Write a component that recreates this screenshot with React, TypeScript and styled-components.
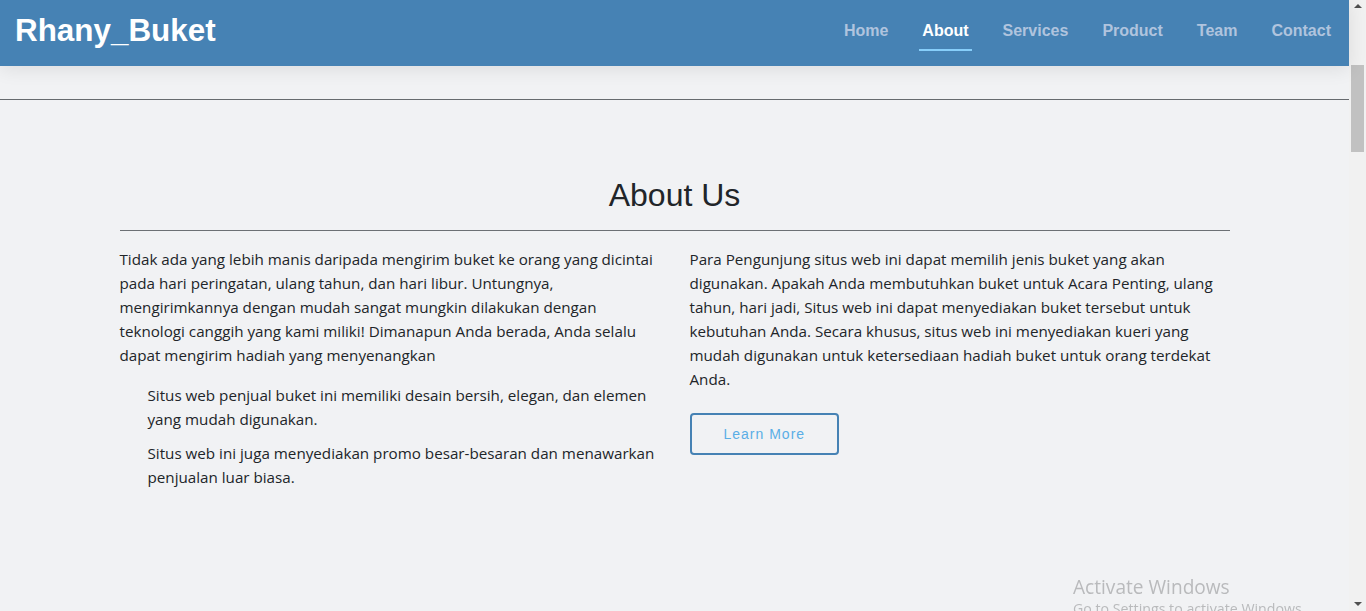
import React from "react";
import styled, { createGlobalStyle } from "styled-components";

const GlobalStyle = createGlobalStyle`
  html, body { height: 100%; }
  body {
    margin: 0;
    overflow: hidden;
    background: #f1f2f4;
    font-family: "Open Sans", "Noto Sans", sans-serif;
    color: #212529;
  }
  #root { height: 100%; }
`;

const Shell = styled.div`
  height: 100vh;
  display: grid;
  grid-template-columns: 1fr 17px;
  overflow: hidden;
`;

const Main = styled.main`
  min-width: 0;
  display: flex;
  flex-direction: column;
`;

const NavBar = styled.header`
  position: relative;
  z-index: 2;
  height: 66px;
  flex: none;
  box-sizing: border-box;
  padding: 0 15px;
  display: flex;
  align-items: center;
  justify-content: space-between;
  background: #4682b4;
  box-shadow: 0 3px 18px rgba(0, 0, 0, 0.09);
`;

const Logo = styled.a`
  font-family: "Liberation Sans", Arial, sans-serif;
  font-weight: 700;
  font-size: 31.4px;
  line-height: 32px;
  color: #ffffff;
  text-decoration: none;
  margin-bottom: 5px;
`;

const NavList = styled.nav`
  display: flex;
  align-items: center;
  gap: 28px;
  margin-bottom: 2px;
`;

const NavLink = styled.a<{ $active?: boolean }>`
  display: block;
  padding: 9px 3px 10px;
  border-bottom: 2px solid ${(p) => (p.$active ? "#87cefa" : "transparent")};
  font-family: "Liberation Sans", Arial, sans-serif;
  font-weight: 700;
  font-size: 16px;
  line-height: 16px;
  color: ${(p) => (p.$active ? "#ffffff" : "#b0c4de")};
  text-decoration: none;
`;

const Band = styled.div`
  height: 34px;
  flex: none;
  box-sizing: border-box;
  border-bottom: 1px solid #666a6e;
`;

const Section = styled.section`
  padding: 76px 0 80px;
`;

const Container = styled.div`
  width: 1110px;
  margin: 0 auto;
`;

const Title = styled.h2`
  margin: 0;
  text-align: center;
  font-family: "Liberation Sans", Arial, sans-serif;
  font-weight: 400;
  font-size: 32px;
  line-height: 38px;
  color: #212529;
`;

const Divider = styled.hr`
  margin: 16px 0;
  border: 0;
  border-top: 1px solid #6c7074;
`;

const Columns = styled.div`
  display: grid;
  grid-template-columns: 540px 540px;
  column-gap: 30px;
`;

const Text = styled.p`
  margin: 0 0 16px;
  font-size: 15.2px;
  line-height: 24px;
`;

const List = styled.ul`
  margin: 0;
  padding-left: 28px;
  list-style: none;
`;

const Item = styled.li`
  font-size: 15.2px;
  line-height: 24px;
  margin-bottom: 10px;
`;

const Button = styled.a`
  display: inline-block;
  margin-top: 6px;
  padding: 10px 32px;
  border: 2px solid #4682b4;
  border-radius: 4px;
  font-family: "Liberation Sans", Arial, sans-serif;
  font-size: 14px;
  line-height: 18px;
  letter-spacing: 1px;
  color: #5aaee6;
  text-decoration: none;
`;

const Scrollbar = styled.aside`
  display: flex;
  flex-direction: column;
  background: #f1f1f1;
`;

const ScrollArrow = styled.div<{ $down?: boolean }>`
  height: 17px;
  flex: none;
  display: flex;
  align-items: center;
  justify-content: center;
  &::before {
    content: "";
    width: 0;
    height: 0;
    border-left: 4px solid transparent;
    border-right: 4px solid transparent;
    ${(p) =>
      p.$down
        ? "border-top: 4px solid #505050; margin-top: 2px;"
        : "border-bottom: 4px solid #505050; margin-top: -5px;"}
  }
`;

const ScrollTrack = styled.div`
  flex: 1;
  padding: 48px 2px 0;
`;

const ScrollThumb = styled.div`
  height: 87px;
  background: #c1c1c1;
`;

const Watermark = styled.div`
  position: fixed;
  left: 1073px;
  top: 574px;
  z-index: 20;
  color: #b9babc;
  font-family: "Open Sans", "Noto Sans", sans-serif;
  pointer-events: none;
`;

const WatermarkTitle = styled.div`
  font-size: 19.1px;
  line-height: 26px;
`;

const WatermarkSub = styled.div`
  font-size: 14.2px;
  line-height: 18px;
  white-space: nowrap;
`;

export default function App() {
  const links = ["Home", "About", "Services", "Product", "Team", "Contact"];

  return (
    <Shell>
      <GlobalStyle />
      <Main>
        <NavBar>
          <Logo href="#">Rhany_Buket</Logo>
          <NavList>
            {links.map((l) => (
              <NavLink key={l} href="#" $active={l === "About"}>
                {l}
              </NavLink>
            ))}
          </NavList>
        </NavBar>
        <Band />
        <Section id="about">
          <Container>
            <Title>About Us</Title>
            <Divider />
            <Columns>
              <div>
                <Text>
                  Tidak ada yang lebih manis daripada mengirim buket ke orang yang dicintai pada hari
                  peringatan, ulang tahun, dan hari libur. Untungnya, mengirimkannya dengan mudah sangat
                  mungkin dilakukan dengan teknologi canggih yang kami miliki! Dimanapun Anda berada, Anda
                  selalu dapat mengirim hadiah yang menyenangkan
                </Text>
                <List>
                  <Item>
                    Situs web penjual buket ini memiliki desain bersih, elegan, dan elemen yang mudah
                    digunakan.
                  </Item>
                  <Item>
                    Situs web ini juga menyediakan promo besar-besaran dan menawarkan penjualan luar biasa.
                  </Item>
                </List>
              </div>
              <div>
                <Text>
                  Para Pengunjung situs web ini dapat memilih jenis buket yang akan digunakan. Apakah Anda
                  membutuhkan buket untuk Acara Penting, ulang tahun, hari jadi, Situs web ini dapat
                  menyediakan buket tersebut untuk kebutuhan Anda. Secara khusus, situs web ini
                  menyediakan kueri yang mudah digunakan untuk ketersediaan hadiah buket untuk orang
                  terdekat Anda.
                </Text>
                <Button href="#">Learn More</Button>
              </div>
            </Columns>
          </Container>
        </Section>
      </Main>
      <Scrollbar>
        <ScrollArrow />
        <ScrollTrack>
          <ScrollThumb />
        </ScrollTrack>
        <ScrollArrow $down />
      </Scrollbar>

      <Watermark>
        <WatermarkTitle>Activate Windows</WatermarkTitle>
        <WatermarkSub>Go to Settings to activate Windows.</WatermarkSub>
      </Watermark>
    </Shell>
  );
}
